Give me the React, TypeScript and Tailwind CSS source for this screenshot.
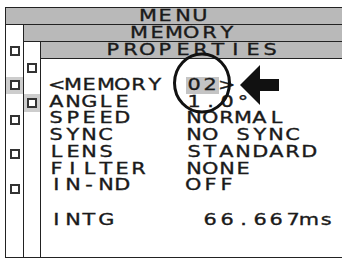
import React from 'react';

// --- LCD style text: every glyph sits in a fixed cell, stretched a little ---
interface LcdProps {
  text: string;
  cell?: string;
  className?: string;
}

const Lcd: React.FC<LcdProps> = ({ text, cell = 'w-[16.5px]', className = '' }) => (
  <span className={`inline-flex ${className}`}>
    {[...text].map((c, i) => (
      <span key={i} className={`inline-block text-center ${cell}`}>
        <span className="inline-block scale-x-[1.3]">{c === ' ' ? '\u00a0' : c}</span>
      </span>
    ))}
  </span>
);

const Bar: React.FC<{ title: string }> = ({ title }) => (
  <div className="h-[17px] shrink-0 border-b border-[#222] bg-[#b9b9b9] flex items-center justify-center leading-[16px]">
    <Lcd text={title} cell="w-[17.5px]" />
  </div>
);

const Square: React.FC = () => <div className="w-[10px] h-[10px] border-2 border-[#333] bg-white" />;

const rows: { label: string; value: React.ReactNode }[] = [
  {
    label: '<MEMORY',
    value: (
      <>
        <Lcd text="02" className="bg-[#c4c4c4]" />
        <Lcd text=">" />
      </>
    ),
  },
  { label: 'ANGLE', value: <Lcd text="1.0°" /> },
  { label: 'SPEED', value: <Lcd text="NORMAL" /> },
  { label: 'SYNC', value: <Lcd text="NO SYNC" /> },
  { label: 'LENS', value: <Lcd text="STANDARD" /> },
  { label: 'FILTER', value: <Lcd text="NONE" /> },
  { label: 'IN-ND', value: <Lcd text="OFF" /> },
];

export default function App() {
  return (
    <div
      className="relative w-[342px] h-[259px] bg-white pt-[7px] pl-[5px] text-[16px] text-[#1a1a1a] [-webkit-text-stroke:0.35px_#1a1a1a] overflow-hidden"
      style={{ fontFamily: '"DejaVu Sans", Verdana, sans-serif' }}
    >
      <div className="h-[251px] border-l border-t border-b border-[#222] flex flex-col">
        <Bar title="MENU" />
        <div className="flex-1 flex">
          {/* outer column of marks */}
          <div className="w-[17px] shrink-0 pt-[17px] flex flex-col gap-[17.5px]">
            {[0, 1, 2, 3, 4].map((i) => (
              <div key={i} className={`h-[17px] flex items-center justify-center ${i === 1 ? 'bg-[#cdcdcd]' : ''}`}>
                <Square />
              </div>
            ))}
          </div>

          <div className="flex-1 border-l border-[#222] flex flex-col">
            <Bar title="MEMORY" />
            <div className="flex-1 flex">
              {/* inner column of marks */}
              <div className="w-[16px] shrink-0 pt-[16.5px] flex flex-col gap-[17px]">
                {[0, 1].map((i) => (
                  <div key={i} className={`h-[18px] flex items-center justify-center ${i === 1 ? 'bg-[#cdcdcd]' : ''}`}>
                    <Square />
                  </div>
                ))}
              </div>

              <div className="flex-1 border-l border-[#222] flex flex-col">
                <Bar title="PROPERTIES" />
                <div className="pl-[7px] pt-[18px] leading-[16.7px]">
                  {rows.map((r) => (
                    <div key={r.label} className="flex">
                      <div className="w-[137.5px] shrink-0">
                        <Lcd text={r.label} />
                      </div>
                      <div className="flex">{r.value}</div>
                    </div>
                  ))}
                  <div className="flex mt-[18px]">
                    <div className="w-[137.5px] shrink-0">
                      <Lcd text="INTG" />
                    </div>
                    <Lcd text=" 66.667ms" />
                  </div>
                </div>
              </div>
            </div>
          </div>
        </div>
      </div>

      {/* callout: circle round the number and the pointing arrow */}
      <svg className="absolute left-0 top-0 pointer-events-none" width="342" height="259" viewBox="0 0 342 259">
        <ellipse cx="202" cy="83" rx="27.5" ry="29" fill="none" stroke="#111" strokeWidth="3" />
        <polygon points="240,85 260,65 260,79 279,79 279,91 260,91 260,105" fill="#111" />
      </svg>
    </div>
  );
}
